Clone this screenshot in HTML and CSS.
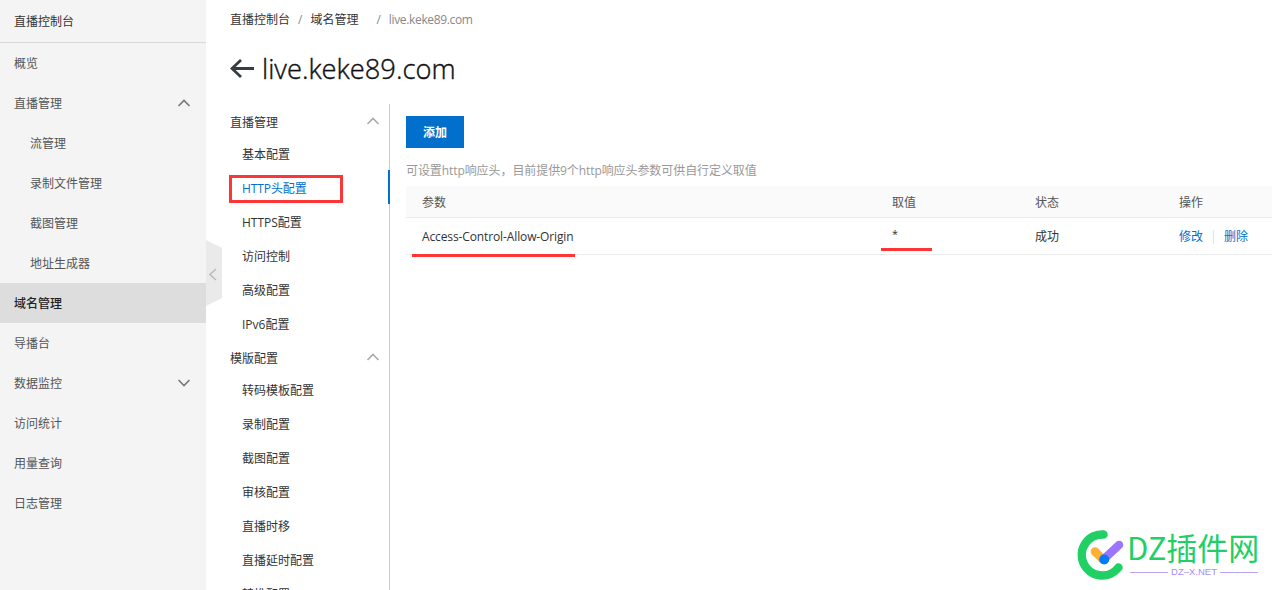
FILE: index.html
```html
<!DOCTYPE html>
<html lang="zh-CN">
<head>
    <meta charset="UTF-8">
    <meta name="viewport" content="width=device-width, initial-scale=1.0">
    <title>直播控制台</title>
    <link rel="stylesheet" href="styles.css">
</head>
<body>
    <aside class="sidebar">
        <div class="sidebar-title">直播控制台</div>
        <ul class="menu">
            <li>概览</li>
            <li>直播管理
                <svg class="chevron" viewBox="0 0 14 8"><path d="M1.5 7 7 1.5 12.5 7"/></svg>
            </li>
            <li class="sub">流管理</li>
            <li class="sub">录制文件管理</li>
            <li class="sub">截图管理</li>
            <li class="sub">地址生成器</li>
            <li class="active">域名管理</li>
            <li>导播台</li>
            <li>数据监控
                <svg class="chevron" viewBox="0 0 14 8"><path d="M1.5 1 7 6.5 12.5 1"/></svg>
            </li>
            <li>访问统计</li>
            <li>用量查询</li>
            <li>日志管理</li>
        </ul>
        <!-- collapse handle on the sidebar edge -->
        <svg class="collapse" viewBox="0 0 16 66">
            <path class="collapse-bg" d="M0 0 16 8V58L0 66Z"/>
            <path class="collapse-arrow" d="M10 29 4 34.5 10 40"/>
        </svg>
    </aside>

    <main class="main">
        <div class="breadcrumb">
            <a>直播控制台</a><span class="sep">/</span><a>域名管理</a><span class="sep wide">/</span><span class="current">live.keke89.com</span>
        </div>
        <h1 class="page-title">
            <svg class="back" viewBox="0 0 24 20"><path d="M24 10.500H2M11 2 2 10.500 11 19"/></svg>
            live.keke89.com
        </h1>

        <div class="content">
            <nav class="config-nav">
                <div class="group"><span>直播管理</span>
                    <svg class="chevron" viewBox="0 0 14 8"><path d="M1.5 7 7 1.5 12.5 7"/></svg>
                </div>
                <ul>
                    <li>基本配置</li>
                    <li class="selected"><span>HTTP头配置</span></li>
                    <li>HTTPS配置</li>
                    <li>访问控制</li>
                    <li>高级配置</li>
                    <li>IPv6配置</li>
                </ul>
                <div class="group"><span>模版配置</span>
                    <svg class="chevron" viewBox="0 0 14 8"><path d="M1.5 7 7 1.5 12.5 7"/></svg>
                </div>
                <ul>
                    <li>转码模板配置</li>
                    <li>录制配置</li>
                    <li>截图配置</li>
                    <li>审核配置</li>
                    <li>直播时移</li>
                    <li>直播延时配置</li>
                    <li>转推配置</li>
                </ul>
            </nav>

            <section class="panel">
                <button class="add-btn">添加</button>
                <p class="hint">可设置http响应头，目前提供9个http响应头参数可供自行定义取值</p>
                <table class="headers-table">
                    <thead>
                        <tr>
                            <th class="col-name">参数</th>
                            <th class="col-value">取值</th>
                            <th class="col-status">状态</th>
                            <th>操作</th>
                        </tr>
                    </thead>
                    <tbody>
                        <tr>
                            <td><span class="mark mark-name">Access-Control-Allow-Origin</span></td>
                            <td><span class="mark mark-value">*</span></td>
                            <td>成功</td>
                            <td><div class="actions"><a>修改</a><a>删除</a></div></td>
                        </tr>
                    </tbody>
                </table>
            </section>
        </div>
    </main>

    <div class="watermark">
        <svg class="wm-logo" viewBox="0 0 50 52">
            <path class="wm-ring" d="M28.500 5.500A20.500 20.500 0 1 0 43.500 38.500"/>
            <path class="wm-left" d="M20 22.500 28 30.500"/>
            <path class="wm-right" d="M44 16 30 29"/>
            <circle class="wm-dot" cx="29.200" cy="30.500" r="5"/>
        </svg>
        <div class="wm-text">
            <div class="wm-name">DZ插件网</div>
            <div class="wm-site">DZ–X.NET</div>
        </div>
    </div>
</body>
</html>
```
FILE: styles.css
```css
* {
    box-sizing: border-box;
}

body {
    margin: 0;
    height: 590px;
    display: flex;
    overflow: hidden;
    font-family: "Open Sans", "Noto Sans CJK SC", sans-serif;
    font-size: 12px;
    color: #333;
    background: #fff;
}

ul {
    list-style: none;
    margin: 0;
    padding: 0;
}

.chevron {
    width: 14px;
    height: 8px;
    fill: none;
    stroke: #777;
    stroke-width: 1.6;
}

/* left sidebar */
.sidebar {
    position: relative;
    flex: none;
    width: 206px;
    background: #f4f4f4;
}

.sidebar-title {
    height: 43px;
    padding-left: 14px;
    line-height: 44px;
    border-bottom: 1px solid #d9d9d9;
}

.menu li {
    display: flex;
    align-items: center;
    justify-content: space-between;
    height: 40px;
    padding: 0 15px 0 14px;
    color: #555;
}

.menu .sub {
    padding-left: 30px;
}

.menu .active {
    background: #ddd;
    color: #222;
    font-weight: 500;
}

.collapse {
    position: absolute;
    left: 206px;
    top: 240px;
    width: 16px;
    height: 66px;
}

.collapse-bg {
    fill: #eaeaea;
}

.collapse-arrow {
    fill: none;
    stroke: #bbb;
    stroke-width: 1.6;
}

/* page */
.main {
    flex: 1;
    display: flex;
    flex-direction: column;
    padding-left: 24px;
}

.breadcrumb {
    display: flex;
    height: 40px;
    line-height: 40px;
    white-space: nowrap;
}

.sep {
    margin: 0 8px;
    color: #888;
}

.sep.wide {
    margin-left: 18px;
}

.current {
    color: #888;
    letter-spacing: -0.35px;
}

.page-title {
    display: flex;
    align-items: center;
    gap: 8px;
    height: 64px;
    margin: 0;
    padding-bottom: 8px;
    font-size: 27.3px;
    font-weight: 300;
    color: #111;
    -webkit-text-stroke: 0.4px #111;
}

.back {
    width: 24px;
    height: 20px;
    fill: none;
    stroke: #373d41;
    stroke-width: 2.8;
}

.content {
    flex: 1;
    display: flex;
    min-height: 0;
}

.config-nav {
    flex: none;
    width: 160px;
    padding-top: 1px;
    border-right: 1px solid #ccc;
}

.group {
    display: flex;
    align-items: center;
    justify-content: space-between;
    height: 32px;
    padding-right: 9px;
}

.group span {
    padding-top: 2px;
}

.group .chevron {
    stroke: #aaa;
}

.config-nav li {
    height: 34px;
    line-height: 36px;
    padding-left: 12px;
}

.config-nav .selected {
    display: flex;
    align-items: center;
    margin: -1px -1px 1px;
    padding-left: 0;
    color: #0070cc;
    border-right: 2px solid #0070cc;
}

.selected span {
    width: 114px;
    height: 28px;
    margin-top: 4px;
    padding-left: 10px;
    line-height: 21px;
    letter-spacing: -0.1px;
    border: 3px solid #fc3636;
}

.panel {
    flex: 1;
    padding: 12px 0 0 16px;
}

.add-btn {
    display: block;
    width: 58px;
    height: 32px;
    padding: 0;
    border: none;
    background: #0070cc;
    color: #fff;
    font-family: inherit;
    font-size: 12px;
    font-weight: 700;
}

.hint {
    margin: 12px 0 5px;
    line-height: 21px;
    letter-spacing: -0.08px;
    color: #999;
}

.headers-table {
    width: 100%;
    table-layout: fixed;
    border-collapse: separate;
    border-spacing: 0;
}

.headers-table th,
.headers-table td {
    padding: 0 0 0 16px;
    text-align: left;
    font-weight: 400;
    border-bottom: 1px solid #ebebeb;
}

.headers-table th {
    height: 32px;
    color: #555;
    background: #fafafa;
}

.headers-table td {
    height: 37px;
}

.col-name {
    width: 470px;
}

.col-value {
    width: 143px;
}

.col-status {
    width: 144px;
}

.actions {
    display: flex;
    align-items: center;
    padding-top: 2px;
}

.actions a {
    color: #0070cc;
    line-height: 14px;
}

.actions a + a {
    margin-left: 10px;
    padding-left: 10px;
    border-left: 1px solid #e5e5e5;
}

/* red underlines */
.mark {
    position: relative;
}

.mark::after {
    content: "";
    position: absolute;
    height: 3px;
    background: #fc3636;
}

.mark-name {
    letter-spacing: -0.12px;
}

.mark-name::after {
    left: -10px;
    top: 26px;
    width: 163px;
}

.mark-value {
    display: block;
    height: 20px;
    line-height: 16px;
    font-size: 11px;
}

.mark-value::after {
    left: -11px;
    top: 22px;
    width: 51px;
}

/* site watermark over the page corner */
.watermark {
    position: absolute;
    left: 1075px;
    top: 529px;
    display: flex;
    gap: 3px;
}

.wm-logo {
    width: 50px;
    height: 52px;
    fill: none;
    stroke-width: 8.5;
    stroke-linecap: round;
}

.wm-ring {
    stroke: #21d064;
}

.wm-left {
    stroke: #ffb02e;
}

.wm-right {
    stroke: #9b74ff;
}

.wm-dot {
    fill: #007aff;
}

.wm-text {
    width: 130px;
}

.wm-name {
    height: 38px;
    margin-left: -1px;
    line-height: 36px;
    font-family: "Noto Sans CJK SC", sans-serif;
    font-size: 31px;
    white-space: nowrap;
    color: #21d064;
}

.wm-site {
    display: flex;
    align-items: center;
    gap: 3px;
    height: 10px;
    margin-left: 2px;
    line-height: 10px;
    font-family: "Liberation Sans", sans-serif;
    font-size: 9.5px;
    white-space: nowrap;
    color: #a98bf5;
}

.wm-site::before,
.wm-site::after {
    content: "";
    flex: 1;
    height: 1px;
    background: #b9a3f5;
}
```
